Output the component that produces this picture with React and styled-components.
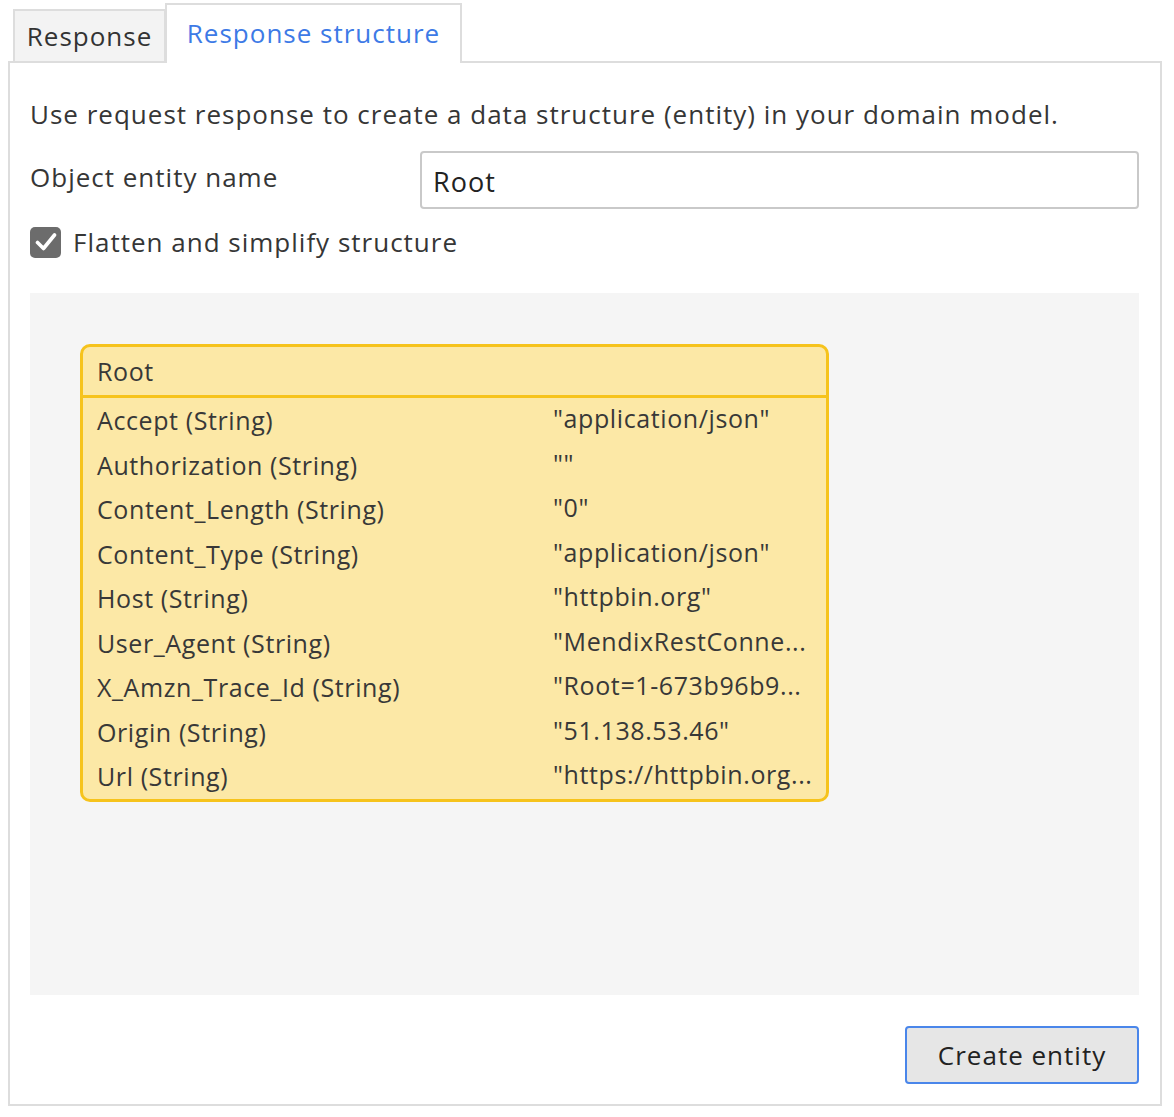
import React from 'react';
import styled, { createGlobalStyle } from 'styled-components';

const GlobalStyle = createGlobalStyle`
  html, body {
    margin: 0;
    padding: 0;
    background: #ffffff;
  }
  body {
    font-family: "Open Sans", "Noto Sans", sans-serif;
    color: #363636;
  }
`;

const fields = [
  { name: 'Accept (String)', value: '"application/json"' },
  { name: 'Authorization (String)', value: '""' },
  { name: 'Content_Length (String)', value: '"0"' },
  { name: 'Content_Type (String)', value: '"application/json"' },
  { name: 'Host (String)', value: '"httpbin.org"' },
  { name: 'User_Agent (String)', value: '"MendixRestConne...' },
  { name: 'X_Amzn_Trace_Id (String)', value: '"Root=1-673b96b9...' },
  { name: 'Origin (String)', value: '"51.138.53.46"' },
  { name: 'Url (String)', value: '"https://httpbin.org...' },
];

const Page = styled.div`
  width: 1154px;
  padding: 3px 0 0 8px;
  font-size: 26px;
  letter-spacing: 1px;
`;

const TabBar = styled.div`
  display: flex;
  align-items: flex-end;
  padding-left: 5px;
  position: relative;
  z-index: 1;
`;

const Tab = styled.div`
  box-sizing: border-box;
  display: flex;
  align-items: center;
  justify-content: center;
  border: 2px solid #dddddd;
  border-bottom: none;
  width: ${p => (p.$active ? '297px' : '153px')};
  height: ${p => (p.$active ? '60px' : '52px')};
  margin-bottom: ${p => (p.$active ? '-2px' : '0')};
  margin-left: ${p => (p.$active ? '-1px' : '0')};
  padding-bottom: ${p => (p.$active ? '3px' : '0')};
  background: ${p => (p.$active ? '#ffffff' : '#f3f3f3')};
  color: ${p => (p.$active ? '#3d7ae6' : '#333333')};
  font-size: 26px;
`;

const Panel = styled.div`
  box-sizing: border-box;
  border: 2px solid #dddddd;
  padding: 33px 21px 20px 20px;
  display: flex;
  flex-direction: column;
`;

const Description = styled.div`
  line-height: 36px;
  white-space: nowrap;
`;

const FormRow = styled.div`
  display: flex;
  align-items: center;
  margin-top: 19px;
`;

const Label = styled.div`
  width: 390px;
  flex: none;
  margin-top: -7px;
`;

const Input = styled.div`
  box-sizing: border-box;
  flex: 1;
  height: 58px;
  border: 2px solid #c9c9c9;
  border-radius: 4px;
  display: flex;
  align-items: center;
  padding: 2px 11px 0;
  font-size: 27px;
  color: #222222;
`;

const CheckRow = styled.label`
  display: flex;
  align-items: center;
  gap: 12px;
  margin-top: 18px;
  height: 30px;
`;

const CheckBox = styled.span`
  width: 31px;
  height: 31px;
  border-radius: 5px;
  background: #6c6c6c;
  display: flex;
  align-items: center;
  justify-content: center;
`;

const Canvas = styled.div`
  margin-top: 36px;
  height: 702px;
  background: #f5f5f5;
  padding: 51px 0 0 50px;
  box-sizing: border-box;
`;

const Entity = styled.div`
  box-sizing: border-box;
  width: 749px;
  background: #fce8a6;
  border: 3px solid #f6c31c;
  border-radius: 10px;
  color: #383838;
  font-size: 25px;
  letter-spacing: 0.6px;
`;

const EntityHeader = styled.div`
  height: 48px;
  display: flex;
  align-items: center;
  padding-left: 14px;
  border-bottom: 3px solid #f6c31c;
`;

const FieldList = styled.div`
  padding: 0 0 0 14px;
`;

const Field = styled.div`
  display: grid;
  grid-template-columns: 456px 1fr;
  height: 44.5px;
  align-items: center;
`;

const FieldValue = styled.span`
  margin-top: -4px;
  white-space: nowrap;
`;

const Footer = styled.div`
  display: flex;
  justify-content: flex-end;
  margin-top: 31px;
`;

const Button = styled.button`
  box-sizing: border-box;
  width: 234px;
  height: 58px;
  background: #e6e6e6;
  border: 2px solid #4a86ea;
  border-radius: 4px;
  font-family: inherit;
  font-size: 26px;
  letter-spacing: 1px;
  color: #222222;
  padding: 0;
`;

const Check = () => (
  <svg width="22" height="20" viewBox="0 0 22 20">
    <path
      d="M2.5 10.5 L8.5 16.5 L19.5 3"
      fill="none"
      stroke="#ffffff"
      strokeWidth="3.6"
      strokeLinecap="round"
      strokeLinejoin="round"
    />
  </svg>
);

const App = () => (
  <Page>
    <GlobalStyle />
    <TabBar>
      <Tab>Response</Tab>
      <Tab $active>Response structure</Tab>
    </TabBar>
    <Panel>
      <Description>
        Use request response to create a data structure (entity) in your domain model.
      </Description>
      <FormRow>
        <Label>Object entity name</Label>
        <Input>Root</Input>
      </FormRow>
      <CheckRow>
        <CheckBox>
          <Check />
        </CheckBox>
        Flatten and simplify structure
      </CheckRow>
      <Canvas>
        <Entity>
          <EntityHeader>Root</EntityHeader>
          <FieldList>
            {fields.map(f => (
              <Field key={f.name}>
                <span>{f.name}</span>
                <FieldValue>{f.value}</FieldValue>
              </Field>
            ))}
          </FieldList>
        </Entity>
      </Canvas>
      <Footer>
        <Button>Create entity</Button>
      </Footer>
    </Panel>
  </Page>
);

export default App;
